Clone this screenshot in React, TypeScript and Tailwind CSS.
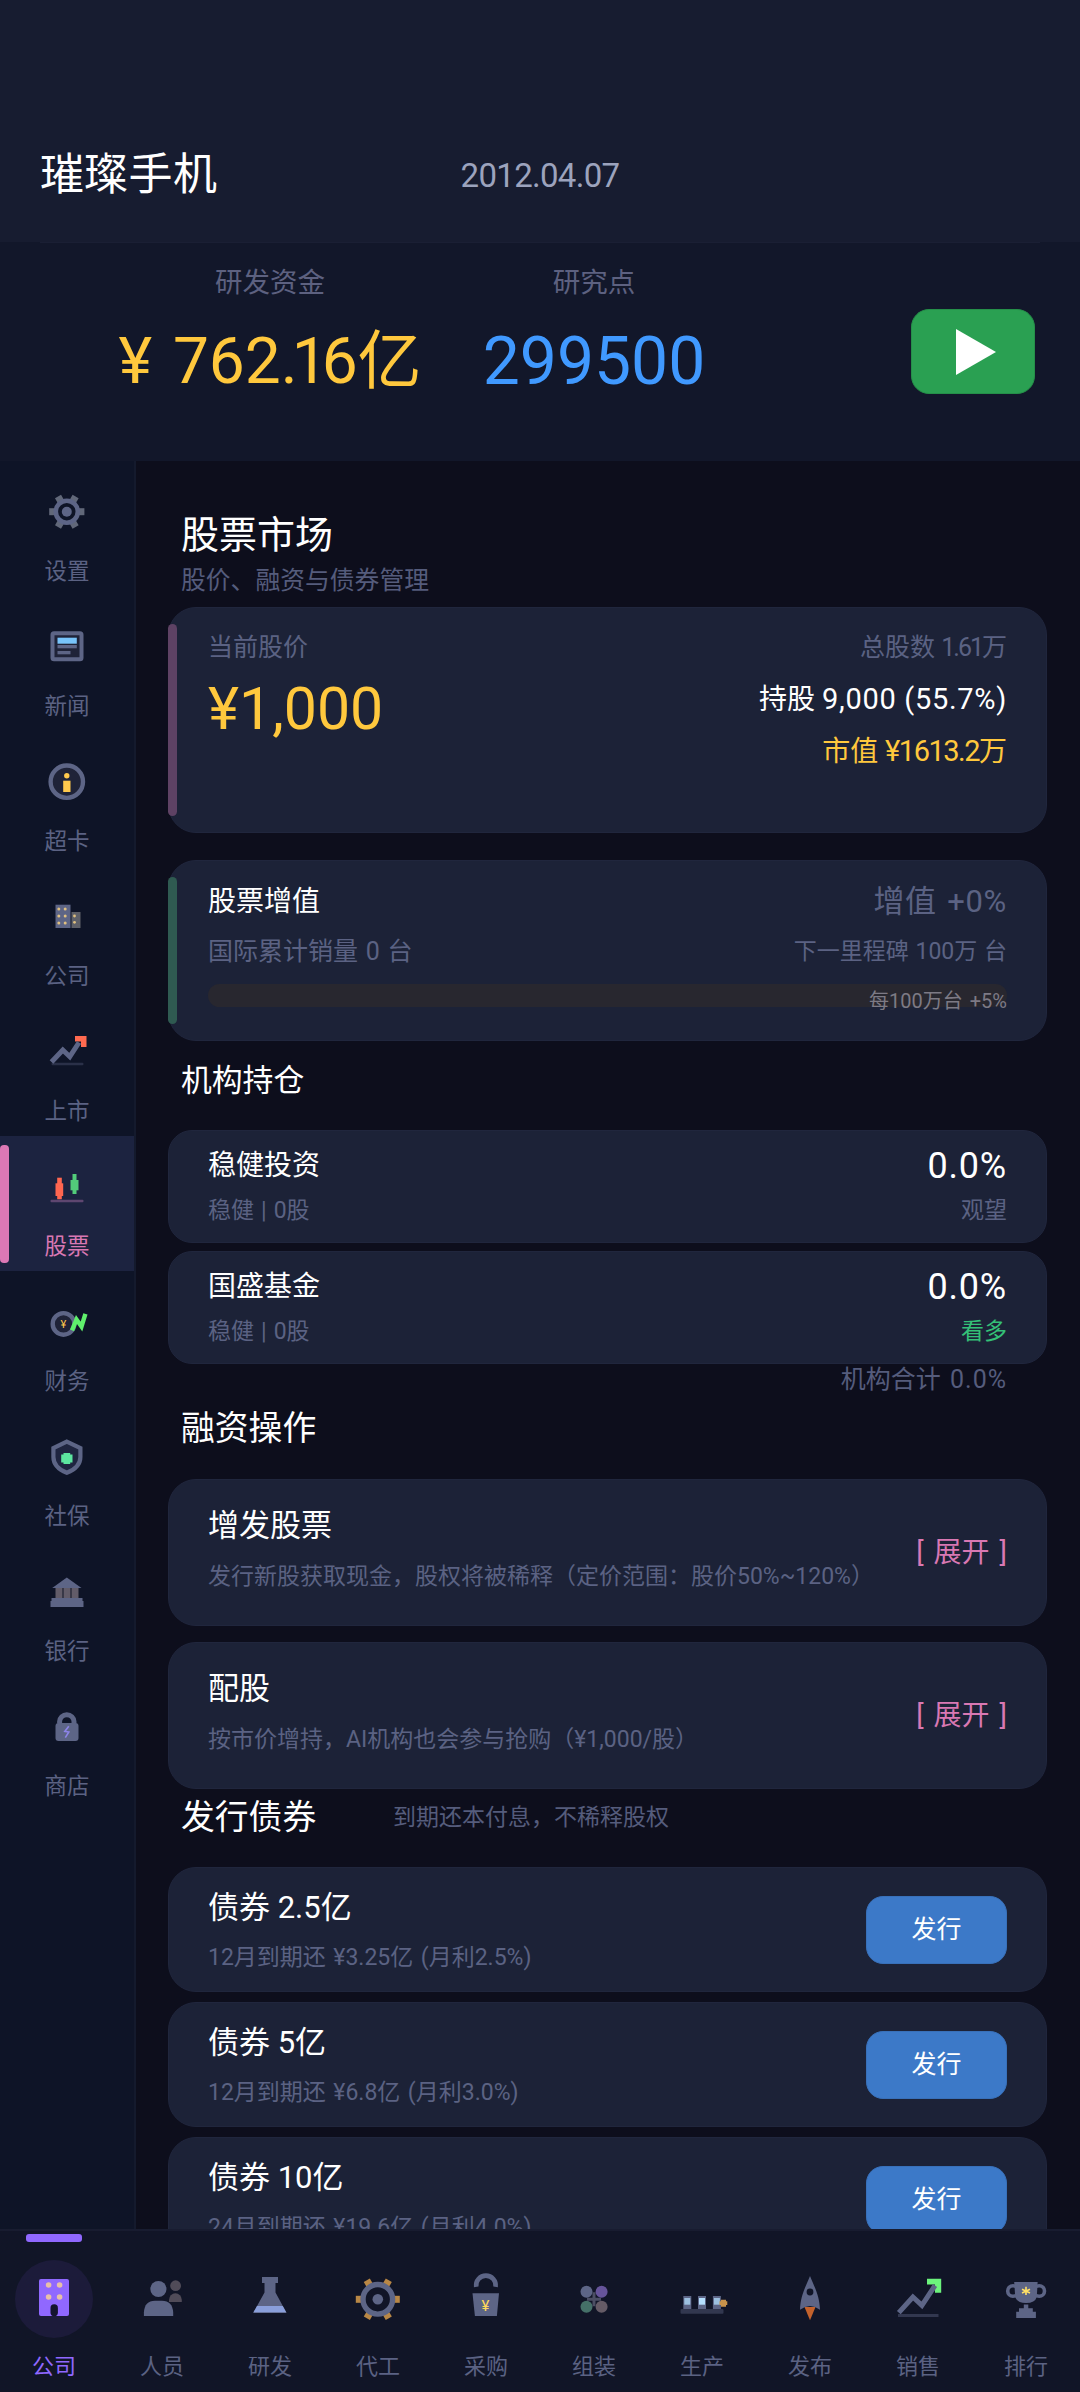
import type { ReactNode } from 'react'
import clsx from 'clsx'

const MUTED = '#5d6586'

interface NavItem {
  label: string
  icon: ReactNode
}

function Icon({ children }: { children: ReactNode }) {
  return (
    <svg width="48" height="48" viewBox="0 0 48 48" fill="none" className="shrink-0 overflow-visible">
      {children}
    </svg>
  )
}

function Teeth({ cx, cy, from, to, width, color }: { cx: number; cy: number; from: number; to: number; width: number; color: string }) {
  return (
    <>
      {[0, 60, 120, 180, 240, 300].map((angle) => (
        <rect
          key={angle}
          x={cx + from}
          y={cy - width / 2}
          width={to - from}
          height={width}
          fill={color}
          transform={`rotate(${angle} ${cx} ${cy})`}
        />
      ))}
    </>
  )
}

function Yen({ x, y, size, color }: { x: number; y: number; size: number; color: string }) {
  return (
    <text x={x} y={y} fontSize={size} fill={color} textAnchor="middle">
      ¥
    </text>
  )
}

const sideItems: NavItem[] = [
  {
    label: '设置',
    icon: (
      <Icon>
        <Teeth cx={23.8} cy={23.7} from={11} to={17.6} width={7} color="#616879" />
        <circle cx="23.8" cy="23.7" r="11" stroke={MUTED} strokeWidth="4.6" />
        <circle cx="23.8" cy="23.7" r="5" fill={MUTED} />
      </Icon>
    ),
  },
  {
    label: '新闻',
    icon: (
      <Icon>
        <rect x="9.5" y="10.3" width="29" height="26" rx="1.5" fill="#1f2338" stroke={MUTED} strokeWidth="4" />
        <rect x="14.5" y="14.7" width="19.3" height="6" fill="#78c4fa" />
        <rect x="14.5" y="22" width="19.3" height="3.3" fill={MUTED} />
        <rect x="14.5" y="28" width="13" height="3.3" fill={MUTED} />
      </Icon>
    ),
  },
  {
    label: '超卡',
    icon: (
      <Icon>
        <circle cx="23.8" cy="23.7" r="16.2" fill="#1f2338" stroke={MUTED} strokeWidth="4.4" />
        <circle cx="23.8" cy="17.7" r="2.7" fill="#ffc94d" />
        <rect x="20.2" y="22.7" width="7.3" height="11.3" fill="#ffc94d" />
      </Icon>
    ),
  },
  {
    label: '公司',
    icon: (
      <Icon>
        <rect x="12.5" y="11.7" width="15" height="23.3" fill={MUTED} />
        <rect x="28.5" y="19" width="9" height="16" fill="#5e6069" />
        {[16, 23, 30].map((y) => (
          <g key={y} fill="#e0c080">
            <circle cx="15.8" cy={y} r="1.5" />
            <circle cx="22.2" cy={y} r="1.5" />
          </g>
        ))}
        <circle cx="31.5" cy="23" r="1.4" fill="#e0c080" />
        <circle cx="31.5" cy="29.3" r="1.4" fill="#e0c080" />
      </Icon>
    ),
  },
  {
    label: '上市',
    icon: (
      <Icon>
        <rect x="8.5" y="34.7" width="32" height="2.5" rx="1.2" fill="#2a3048" />
        <path d="M32 8H43.5V19H38V13.5H32Z" fill="#ff6a50" />
        <path d="M8.5 34L19.8 22L26.8 28.7L36 14.5" stroke={MUTED} strokeWidth="5" />
      </Icon>
    ),
  },
  {
    label: '股票',
    icon: (
      <Icon>
        <rect x="12.5" y="20.3" width="7.7" height="12.7" fill="#ff6650" />
        <rect x="14.2" y="14.7" width="4.6" height="21.6" fill="#ff6650" />
        <rect x="27.5" y="17" width="8" height="10.3" fill="#52cc7a" />
        <rect x="29.5" y="11" width="4" height="20" fill="#52cc7a" />
        <rect x="7.5" y="36.7" width="33" height="2.6" rx="1" fill="#5e4670" />
      </Icon>
    ),
  },
  {
    label: '财务',
    icon: (
      <Icon>
        <circle cx="20.5" cy="25.9" r="10.8" fill="#1f2338" stroke={MUTED} strokeWidth="4.4" />
        <Yen x={20.5} y={30} size={11} color="#ffc94d" />
        <path d="M29 32.4L33.5 21.5L38.5 28.5L42.4 15.8" stroke="#5ff06c" strokeWidth="4.4" />
      </Icon>
    ),
  },
  {
    label: '社保',
    icon: (
      <Icon>
        <path d="M23.8 8.6L37.4 15V24Q37.4 34.5 23.8 39.8Q10.4 34.5 10.4 24V15Z" fill="#1f2540" stroke={MUTED} strokeWidth="4.2" />
        <path d="M20.5 20H27.2V21.5H29.5V29.5H27.2V31H20.5V29.5H18.2V21.5H20.5Z" fill="#5de6a0" />
      </Icon>
    ),
  },
  {
    label: '银行',
    icon: (
      <Icon>
        <path d="M23.8 9.5L38.5 19.9H9.2Z" fill={MUTED} />
        <path d="M12.5 20H19.5V30H12.5ZM20.5 20H27.5V30H20.5ZM28.5 20H35.5V30H28.5Z" fill="#625c69" />
        <path d="M8.5 29.9H39.5V33H40.5V39H7.5V33H8.5Z" fill={MUTED} />
      </Icon>
    ),
  },
  {
    label: '商店',
    icon: (
      <Icon>
        <path d="M16.6 20.5V18.6A7.2 6.8 0 0 1 31 18.6V20.5" stroke={MUTED} strokeWidth="5" />
        <rect x="12.5" y="19.9" width="23" height="18.2" rx="3" fill={MUTED} />
        <path d="M25.8 23.2L21.8 28.4L25.8 29L22.3 34.6" stroke="#8d84e8" strokeWidth="1.6" />
      </Icon>
    ),
  },
]

const tabItems: NavItem[] = [
  {
    label: '公司',
    icon: (
      <Icon>
        <rect x="9" y="4" width="30" height="37" rx="2" fill="#9068ff" />
        {[10, 22].map((y) => (
          <g key={y} fill="#e8c0a8">
            <circle cx="18.6" cy={y} r="2.8" />
            <circle cx="29.6" cy={y} r="2.8" />
          </g>
        ))}
        <rect x="20.5" y="29.3" width="7.4" height="11.9" rx="3.6" fill="#14142e" />
      </Icon>
    ),
  },
  {
    label: '人员',
    icon: (
      <Icon>
        <circle cx="37.6" cy="10.7" r="5.4" fill="#504b58" />
        <path d="M31 27V25A6.4 6.7 0 0 1 43.8 25V27Z" fill="#504b58" />
        <circle cx="20.4" cy="14" r="8.1" fill={MUTED} />
        <path d="M5.9 41V37.5Q6.5 25.7 17 25.7H24Q34.5 25.7 35.2 37.5V41Z" fill={MUTED} />
      </Icon>
    ),
  },
  {
    label: '研发',
    icon: (
      <Icon>
        <path d="M16 2H32V8H29.5V17.5L40.6 38H7.1L18.5 17.5V8H16Z" fill={MUTED} />
        <path d="M11 31H36.8L40.2 37.3H7.5Z" fill="#8a9fdb" />
      </Icon>
    ),
  },
  {
    label: '代工',
    icon: (
      <Icon>
        <Teeth cx={23.8} cy={24.3} from={15} to={22} width={7} color="#b98745" />
        <circle cx="23.8" cy="24.3" r="14.8" fill="#111527" stroke={MUTED} strokeWidth="5.4" />
        <circle cx="23.8" cy="24.3" r="5.3" fill={MUTED} />
      </Icon>
    ),
  },
  {
    label: '采购',
    icon: (
      <Icon>
        <path d="M14.2 11.8A9.8 9.8 0 1 1 33.6 11.8" stroke={MUTED} strokeWidth="4.6" />
        <path d="M10.5 18.3H37L34.9 41H12.9Z" fill={MUTED} />
        <Yen x={23.5} y={35.8} size={15} color="#ffd95a" />
      </Icon>
    ),
  },
  {
    label: '组装',
    icon: (
      <Icon>
        <circle cx="16.5" cy="16.7" r="6" fill={MUTED} />
        <circle cx="31.6" cy="16.7" r="6" fill="#66549a" />
        <circle cx="16.5" cy="31.7" r="6" fill="#457068" />
        <circle cx="31.6" cy="31.7" r="6" fill="#655b66" />
        <path d="M24 17.3V31.3M17 24.3H31" stroke="#a5a8c0" strokeOpacity=".4" strokeWidth="3" />
      </Icon>
    ),
  },
  {
    label: '生产',
    icon: (
      <Icon>
        <rect x="2.5" y="34" width="43" height="4.7" rx="1" fill="#32374f" />
        {[5.3, 20, 34.9].map((x) => (
          <rect key={x} x={x} y="21" width="8" height="13" fill={MUTED} />
        ))}
        <rect x="6.3" y="23" width="6" height="6.7" fill="#9dc0e0" />
        <rect x="21" y="23" width="6" height="6.7" fill="#b5e0ff" />
        <rect x="35.9" y="23" width="6" height="6.7" fill="#9dc0e0" />
        <path d="M41.5 26.3H43V24.8H48V26.3H49.3V30H48V31.7H43V30H41.5Z" fill="#c8934b" />
      </Icon>
    ),
  },
  {
    label: '发布',
    icon: (
      <Icon>
        <path d="M24 1C29 13 33.5 21 34 34.7Q29 31 24 31Q19 31 14 34.7C14.5 21 19 13 24 1Z" fill={MUTED} />
        <circle cx="24" cy="17" r="3.4" fill="#111527" />
        <path d="M18.5 32H29.5L24 45.3Z" fill="#c4622c" />
      </Icon>
    ),
  },
  {
    label: '销售',
    icon: (
      <Icon>
        <rect x="4" y="39" width="40.5" height="3" fill="#32374f" />
        <path d="M33 3.7H47.2V17.7H41V9.5H33Z" fill="#6cf37c" />
        <path d="M4.8 37.7L18.9 22L27.9 30.3L41 10.5" stroke={MUTED} strokeWidth="5" />
      </Icon>
    ),
  },
  {
    label: '排行',
    icon: (
      <Icon>
        <circle cx="11" cy="16" r="5.3" stroke={MUTED} strokeWidth="3.6" />
        <circle cx="37.2" cy="16" r="5.3" stroke={MUTED} strokeWidth="3.6" />
        <path d="M12.2 7H35.6L34.8 22Q33 28 24 28Q15 28 13.2 22Z" fill={MUTED} />
        <path d="M21.8 29.5H26.3V33.3H30.8V36.7H33.9V43H14.2V36.7H17V33.3H21.8Z" fill={MUTED} />
        <path d="M24 11.8V20M20 14.3L28 18M28 14.3L20 18" stroke="#ffe066" strokeWidth="1.6" />
      </Icon>
    ),
  },
]

const institutions = [
  { name: '稳健投资', detail: '稳健 | 0股', share: '0.0%', mood: '观望', bullish: false },
  { name: '国盛基金', detail: '稳健 | 0股', share: '0.0%', mood: '看多', bullish: true },
]

const actions = [
  { title: '增发股票', desc: '发行新股获取现金，股权将被稀释（定价范围：股价50%~120%）' },
  { title: '配股', desc: '按市价增持，AI机构也会参与抢购（¥1,000/股）' },
]

const bonds = [
  { title: '债券 2.5亿', desc: '12月到期还 ¥3.25亿 (月利2.5%)' },
  { title: '债券 5亿', desc: '12月到期还 ¥6.8亿 (月利3.0%)' },
  { title: '债券 10亿', desc: '24月到期还 ¥19.6亿 (月利4.0%)' },
]

function Card({ className, children }: { className?: string; children: ReactNode }) {
  return (
    <div className={clsx('relative shrink-0 border border-[#20263d] bg-[#1c2237] pr-[39px] pl-[39px]', className)}>
      {children}
    </div>
  )
}

function Header() {
  return (
    <header className="shrink-0">
      <div className="grid h-[242px] grid-cols-3 items-center bg-[#171c30] pt-[108px]">
        <h1 className="pl-10 text-[44px] leading-none tracking-[0.3px] whitespace-nowrap">璀璨手机</h1>
        <span className="text-center text-[33px] leading-none tracking-[-0.7px] text-[#9ca3bd]">2012.04.07</span>
      </div>
      <div className="mx-10 h-px bg-[#1a1f34]" />
      <div className="flex h-[218px] pt-5 pl-[108px] text-center">
        <div className="w-[324px]">
          <div className="text-[27.5px] leading-10 text-[#5d6180]">研发资金</div>
          <div className="mt-[19px] text-[64px] leading-[80px] [word-spacing:5px] whitespace-nowrap text-[#ffc83d]">
            ¥ 762<span className="tracking-[-6px]">.1</span>6亿
          </div>
        </div>
        <div className="w-[324px]">
          <div className="text-[27.5px] leading-10 text-[#5d6180]">研究点</div>
          <div className="mt-[19px] text-[66px] leading-[80px] text-[#4099ff]">299500</div>
        </div>
        <button className="mt-[46px] ml-[155px] flex h-[85px] w-[124px] items-center justify-center rounded-[18px] border border-[#258f49] bg-[#2aa052]">
          <svg width="40" height="46" viewBox="0 0 40 46" className="ml-1.5">
            <path d="M0 0L40 23L0 46Z" fill="#fff" />
          </svg>
        </button>
      </div>
    </header>
  )
}

function Sidebar() {
  return (
    <nav className="w-[136px] shrink-0 border-r-2 border-[#141a2d] bg-[#0e1427]">
      {sideItems.map((item) => {
        const active = item.label === '股票'
        return (
          <div
            key={item.label}
            className={clsx('relative flex h-[135px] flex-col items-center pt-[27px]', active ? 'bg-[#1c2340]' : '')}
          >
            {active && <div className="absolute top-[9px] left-0 h-[118px] w-[9px] rounded-[4px] bg-[#dc78b5]" />}
            {item.icon}
            <span className={clsx('mt-[20px] text-[22.5px] leading-[30px]', active ? 'text-[#d978b3]' : 'text-[#5b6283]')}>
              {item.label}
            </span>
          </div>
        )
      })}
    </nav>
  )
}

function StockMarket() {
  return (
    <main className="flex w-[944px] flex-col overflow-hidden bg-[#0d0e1c] pt-[51px] pr-[33px] pl-[32px]">
      <h2 className="pl-[13px] text-[38px] leading-[46px]">股票市场</h2>
      <p className="pl-[13px] text-[24.8px] leading-[45px] text-[#555c7c]">股价、融资与债券管理</p>

      <Card className="mt-1 flex h-[226px] justify-between rounded-[28px] pt-[25px]">
        <div className="absolute top-[16px] -left-px h-[192px] w-[9px] rounded-full bg-[#5e4264]" />
        <div>
          <div className="text-[25px] leading-[30px] text-[#5b6283]">当前股价</div>
          <div className="mt-4 text-[59px] leading-[60px] text-[#ffc83d]">¥1,000</div>
        </div>
        <div className="text-right">
          <div className="text-[25px] leading-[30px] text-[#5b6283]">
            总股数 <span className="tracking-[-2px]">1.61</span>万
          </div>
          <div className="mt-[21px] text-[28px] leading-[30px]">
            持股 <span className="text-[29px] tracking-[0.7px]">9,000 (55.7%)</span>
          </div>
          <div className="mt-[21px] text-[28px] leading-[30px] text-[#ffc83d]">
            市值 <span className="text-[29px] tracking-[-1.5px]">¥1613.2</span>万
          </div>
        </div>
      </Card>

      <Card className="mt-[27px] h-[181px] rounded-[28px] pt-[26px]">
        <div className="absolute top-[16px] -left-px h-[147px] w-[9px] rounded-full bg-[#2f5a51]" />
        <div className="flex justify-between leading-[30px]">
          <span className="text-[28px]">股票增值</span>
          <span className="text-[31px] tracking-[0.7px] [word-spacing:2px] text-[#5b6283]">增值 +0%</span>
        </div>
        <div className="mt-[20px] flex justify-between leading-[30px] text-[#5b6283]">
          <span className="text-[25px] [word-spacing:1.5px]">国际累计销量 0 台</span>
          <span className="text-[23px] [word-spacing:1px]">下一里程碑 100万 台</span>
        </div>
        <div className="relative mt-[17px] h-[23px] rounded-full bg-[#28272f]">
          <span className="absolute top-[2px] right-0 text-[20px] leading-[30px] [word-spacing:2px] text-[#7d7a85]">
            每100万台 +5%
          </span>
        </div>
      </Card>

      <h3 className="mt-[20px] pl-[13px] text-[30.8px] leading-10">机构持仓</h3>
      <div className="mt-[29px] flex flex-col gap-2">
        {institutions.map((it) => (
          <Card key={it.name} className="h-[113px] rounded-[24px] pt-[20px]">
            <div className="flex justify-between leading-[30px]">
              <span className="text-[28px]">{it.name}</span>
              <span className="text-[36px] tracking-[0.8px]">{it.share}</span>
            </div>
            <div className="mt-[15px] flex justify-between text-[23px] leading-[30px] [word-spacing:1.3px] text-[#5b6283]">
              <span>{it.detail}</span>
              <span className={it.bullish ? 'text-[#34c077]' : ''}>{it.mood}</span>
            </div>
          </Card>
        ))}
      </div>
      <div className="pr-[40px] text-right text-[25px] leading-[31px] [word-spacing:3px] text-[#555c7c]">
        机构合计 <span className="tracking-[1px]">0.0%</span>
      </div>

      <h3 className="mt-[14px] pl-[13px] text-[33.8px] leading-10">融资操作</h3>
      <div className="mt-[30px] flex flex-col gap-4">
        {actions.map((action) => (
          <Card key={action.title} className="flex h-[147px] items-center justify-between rounded-[28px]">
            <div>
              <div className="text-[31px] leading-[30px]">{action.title}</div>
              <div className="mt-[21px] mb-[3px] text-[23px] leading-[30px] whitespace-nowrap text-[#5b6283]">{action.desc}</div>
            </div>
            <button className="mt-px text-[28px] leading-[30px] [word-spacing:3px] whitespace-nowrap text-[#d978b3]">
              [ 展开 ]
            </button>
          </Card>
        ))}
      </div>

      <div className="mt-[9px] flex items-center pl-[13px] leading-10">
        <h3 className="w-[212px] text-[33.8px]">发行债券</h3>
        <span className="text-[23px] text-[#555c7c]">到期还本付息，不稀释股权</span>
      </div>
      <div className="mt-[29px] flex flex-col gap-[10px]">
        {bonds.map((bond) => (
          <Card key={bond.title} className="flex h-[125px] items-center justify-between rounded-[28px]">
            <div className="pt-[6px]">
              <div className="text-[31px] leading-[30px]">{bond.title}</div>
              <div className="mt-5 text-[23px] leading-[30px] [word-spacing:1.8px] text-[#5b6283]">{bond.desc}</div>
            </div>
            <button className="h-[68px] w-[141px] rounded-[17px] border border-[#3870b9] bg-[#3c79c8] text-[25px] leading-[30px]">
              发行
            </button>
          </Card>
        ))}
      </div>
    </main>
  )
}

function TabBar() {
  return (
    <nav className="grid h-[163px] shrink-0 grid-cols-10 border-t-2 border-[#181c30] bg-[#111527]">
      {tabItems.map((item, i) => (
        <div key={item.label} className="relative flex flex-col items-center pt-[29px]">
          {i === 0 && <div className="absolute top-[3px] h-2 w-14 rounded-[3px] bg-[#9068ff]" />}
          <div className={clsx('flex size-[78px] items-center justify-center rounded-full', i === 0 ? 'bg-[#1c1b3a]' : '')}>
            {item.icon}
          </div>
          <span className={clsx('mt-[14px] text-[22px] leading-[30px]', i === 0 ? 'text-[#9068ff]' : 'text-[#5b6283]')}>
            {item.label}
          </span>
        </div>
      ))}
    </nav>
  )
}

export default function App() {
  return (
    <div className="flex h-[2392px] w-[1080px] flex-col overflow-hidden bg-[#12172a] font-[Roboto,'Noto_Sans_CJK_SC',sans-serif] text-white">
      <Header />
      <div className="flex min-h-0 flex-1">
        <Sidebar />
        <StockMarket />
      </div>
      <TabBar />
    </div>
  )
}
